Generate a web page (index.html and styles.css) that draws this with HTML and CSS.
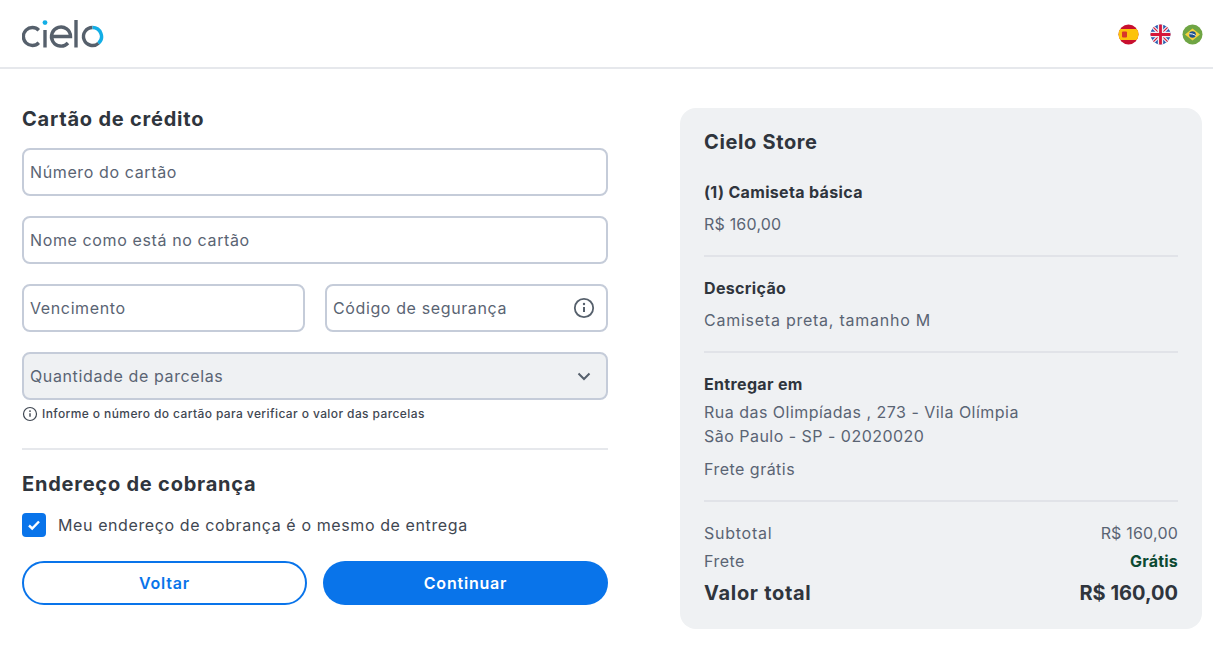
FILE: index.html

```html
<!DOCTYPE html>
<html lang="pt-BR">
<head>
  <meta charset="UTF-8">
  <title>Cielo Checkout</title>
  <meta name="viewport" content="width=device-width, initial-scale=1.0">
  <link rel="stylesheet" href="styles.css">
</head>
<body>
  <header class="topbar">
    <svg class="logo" width="82" height="30" viewBox="0 0 82 30" fill="none" stroke="#56606c" stroke-width="3.400">
      <path d="M16.800 10.200A9 9 0 1 0 16.800 22.800"/>
      <path d="M23 10v17.500"/>
      <circle cx="23" cy="2.600" r="2.400" fill="#12aee6" stroke="none"/>
      <path d="M29.500 16.500H48.500A9.500 9.500 0 1 0 46 23"/>
      <path d="M54 0v27.500"/>
      <path d="M70.500 7.500A9 9 0 1 0 76.500 23.200"/>
      <path d="M70.500 7.500A9 9 0 0 1 76.500 23.200" stroke="#12aee6"/>
    </svg>
    <div class="flags">
      <svg width="21" height="21" viewBox="0 0 21 21"><clipPath id="fes"><circle cx="10.500" cy="10.500" r="10"/></clipPath><g clip-path="url(#fes)"><rect width="21" height="21" fill="#c8102e"/><rect y="5" width="21" height="11" fill="#fcc30b"/><rect x="4" y="7.500" width="5" height="6" rx="1" fill="#d8372a"/></g></svg>
      <svg width="21" height="21" viewBox="0 0 21 21"><clipPath id="fuk"><circle cx="10.500" cy="10.500" r="10"/></clipPath><g clip-path="url(#fuk)"><rect width="21" height="21" fill="#2a5bb0"/><path d="M0 0l21 21M21 0L0 21" stroke="#f1f1f4" stroke-width="3.400"/><path d="M0 0l21 21M21 0L0 21" stroke="#d6173a" stroke-width="1.200"/><path d="M10.500 0v21M0 10.500h21" stroke="#f1f1f4" stroke-width="5.400"/><path d="M10.500 0v21M0 10.500h21" stroke="#d6173a" stroke-width="2.800"/></g></svg>
      <svg width="21" height="21" viewBox="0 0 21 21"><circle cx="10.500" cy="10.500" r="10" fill="#6fa544"/><path d="M10.500 4.500l7.500 6-7.500 6-7.500-6z" fill="#f7d23e"/><circle cx="10.500" cy="10.500" r="3.300" fill="#1d4f8f"/><path d="M7.300 9.800c2.200-.2 4.500.4 6.300 1.700" stroke="#fff" fill="none"/></svg>
    </div>
  </header>

  <main class="page">
    <section class="form-col">
      <h2 class="form-title">Cartão de crédito</h2>
      <div class="field">Número do cartão</div>
      <div class="field">Nome como está no cartão</div>
      <div class="field-row">
        <div class="field">Vencimento</div>
        <div class="field field-icon">
          Código de segurança
          <svg width="22" height="22" viewBox="0 0 22 22" fill="none" stroke="#56606c"><circle cx="11" cy="11" r="9.200" stroke-width="1.800"/><path d="M11 10v5" stroke-width="2"/><circle cx="11" cy="7" r="1.200" fill="#56606c" stroke="none"/></svg>
        </div>
      </div>
      <div class="field field-icon field-select">
        Quantidade de parcelas
        <svg width="16" height="10" viewBox="0 0 16 10" fill="none" stroke="#56606c" stroke-width="2"><path d="M2.500 2.500L8 8l5.500-5.500"/></svg>
      </div>
      <p class="hint">
        <svg width="16" height="16" viewBox="0 0 16 16" fill="none" stroke="#3f4752"><circle cx="8" cy="8" r="6.500" stroke-width="1.200"/><path d="M8 7.200v3.600" stroke-width="1.400"/><circle cx="8" cy="5.100" r=".9" fill="#3f4752" stroke="none"/></svg>
        Informe o número do cartão para verificar o valor das parcelas
      </p>
      <hr class="rule">
      <h2 class="form-title billing-title">Endereço de cobrança</h2>
      <div class="check-row">
        <span class="checkbox"><svg width="14" height="12" viewBox="0 0 14 12" fill="none" stroke="#fff" stroke-width="2.400"><path d="M2 6.500l3.200 3L12 2.500"/></svg></span>
        Meu endereço de cobrança é o mesmo de entrega
      </div>
      <div class="actions">
        <button class="btn btn-outline">Voltar</button>
        <button class="btn btn-primary">Continuar</button>
      </div>
    </section>

    <aside class="summary">
      <h2 class="summary-title">Cielo Store</h2>
      <div class="block">
        <div class="label">(1) Camiseta básica</div>
        <div class="muted amount">R$ 160,00</div>
      </div>
      <div class="block">
        <div class="label">Descrição</div>
        <div class="muted wide">Camiseta preta, tamanho M</div>
      </div>
      <div class="block block-last">
        <div class="label">Entregar em</div>
        <div class="muted address">Rua das Olimpíadas , 273 - Vila Olímpia<br>São Paulo - SP - 02020020</div>
        <div class="muted shipping">Frete grátis</div>
      </div>
      <div class="totals">
        <div class="line muted"><span class="wide">Subtotal</span><span class="amount">R$ 160,00</span></div>
        <div class="line muted"><span>Frete</span><span class="free">Grátis</span></div>
        <div class="line total"><span class="total-label">Valor total</span><span>R$ 160,00</span></div>
      </div>
    </aside>
  </main>
</body>
</html>
```

FILE: styles.css

```css
body {
  margin: 0;
  font-family: Inter, "Open Sans", sans-serif;
  background: #fff;
  color: #2f353d;
}
.topbar {
  height: 67px;
  border-bottom: 2px solid #e6e8ec;
  padding: 0 10px 0 22px;
  display: flex;
  align-items: center;
  justify-content: space-between;
}
.logo {
  margin-top: 3px;
}
.flags {
  display: flex;
  gap: 11px;
  margin-top: 2px;
}
.page {
  display: flex;
  justify-content: space-between;
  padding: 38px 11px 0 22px;
}
.form-col {
  width: 586px;
}
.form-title {
  margin: 0 0 17px;
  font-size: 20px;
  line-height: 24px;
  font-weight: 700;
  letter-spacing: .78px;
}
.field {
  box-sizing: border-box;
  height: 48px;
  border: 2px solid #c5ccd9;
  border-radius: 8px;
  padding: 0 14px 0 6px;
  margin-bottom: 20px;
  font-size: 16px;
  color: #5a6473;
  display: flex;
  align-items: center;
  letter-spacing: .62px;
}
.field-row {
  display: grid;
  grid-template-columns: 283px 283px;
  gap: 20px;
}
.field-icon {
  justify-content: space-between;
  padding-right: 11px;
}
.field-select {
  background: #eff1f3;
  margin-bottom: 6px;
  padding-right: 14px;
}
.hint {
  margin: 0;
  display: flex;
  align-items: center;
  gap: 4px;
  font-size: 12px;
  line-height: 16px;
  font-weight: 500;
  color: #3f4752;
  letter-spacing: .4px;
}
.rule {
  border: 0;
  border-top: 2px solid #e6e8ec;
  margin: 26px 0 22px;
}
.billing-title {
  margin-bottom: 17px;
}
.check-row {
  display: flex;
  align-items: center;
  gap: 12px;
  font-size: 16px;
  color: #3f4752;
  letter-spacing: .6px;
}
.checkbox {
  width: 24px;
  height: 24px;
  border-radius: 4px;
  background: #0974ea;
  display: flex;
  align-items: center;
  justify-content: center;
}
.actions {
  display: flex;
  gap: 16px;
  margin-top: 24px;
}
.btn {
  height: 44px;
  border-radius: 22px;
  font-family: inherit;
  font-size: 16px;
  font-weight: 600;
  padding: 0;
  letter-spacing: .8px;
}
.btn-outline {
  width: 285px;
  background: #fff;
  border: 2px solid #0974ea;
  color: #0974ea;
}
.btn-primary {
  width: 285px;
  background: #0974ea;
  border: 0;
  color: #fff;
}
.summary {
  box-sizing: border-box;
  width: 522px;
  height: 521px;
  margin-top: 1px;
  background: #eff1f3;
  border-radius: 16px;
  padding: 22px 24px;
}
.summary-title {
  margin: 0 0 26px;
  font-size: 20px;
  line-height: 24px;
  font-weight: 700;
  letter-spacing: .64px;
}
.block {
  border-bottom: 2px solid #e1e3e8;
  padding-bottom: 19px;
  margin-bottom: 19px;
}
.block-last {
  margin-bottom: 17px;
}
.label {
  font-size: 16px;
  line-height: 24px;
  font-weight: 700;
  margin-bottom: 8px;
  letter-spacing: .34px;
}
.muted {
  font-size: 16px;
  line-height: 24px;
  color: #5a6473;
  letter-spacing: .48px;
}
.muted.wide, .line .wide {
  letter-spacing: .75px;
}
.muted.amount, .line .amount {
  letter-spacing: .2px;
}
.block .address {
  margin-top: -4px;
}
.shipping {
  margin-top: 9px;
}
.line {
  display: flex;
  justify-content: space-between;
  line-height: 28px;
}
.free {
  color: #0c4a32;
  font-weight: 700;
  letter-spacing: .2px;
}
.total {
  font-size: 20px;
  line-height: 36px;
  font-weight: 700;
  color: #2f353d;
}
.total-label {
  letter-spacing: .7px;
}
```
